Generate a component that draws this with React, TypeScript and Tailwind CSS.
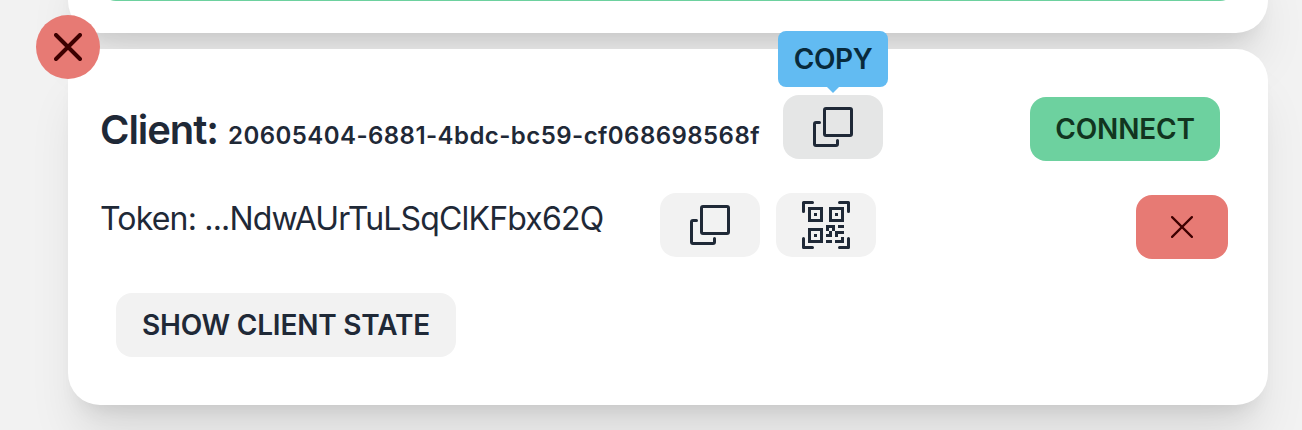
import type { ReactNode } from "react";
import { BsQrCodeScan } from "react-icons/bs";

const CARD =
  "w-[1200px] shrink-0 rounded-[32px] bg-white shadow-[0_40px_50px_-10px_rgb(0_0_0/0.1),0_16px_20px_-12px_rgb(0_0_0/0.1)]";

function CopyIcon() {
  return (
    <svg width="40" height="40" viewBox="0 0 40 40" fill="none" stroke="currentColor" strokeWidth="3" strokeLinecap="round" strokeLinejoin="round">
      <rect x="11.5" y="1.5" width="27" height="27" rx="1.5" />
      <path d="M6.5 15.5H3a1.5 1.5 0 0 0-1.5 1.5v20A1.5 1.5 0 0 0 3 38.5h20a1.5 1.5 0 0 0 1.5-1.5v-3.5" />
    </svg>
  );
}

function CrossIcon({ size, stroke }: { size: number; stroke: number }) {
  const near = stroke / 2;
  const far = size - near;
  return (
    <svg width={size} height={size} viewBox={`0 0 ${size} ${size}`} fill="none" stroke="currentColor" strokeWidth={stroke} strokeLinecap="round">
      <path d={`M${near} ${near}L${far} ${far}M${far} ${near}L${near} ${far}`} />
    </svg>
  );
}

function Button({ className, label, children }: { className: string; label?: string; children: ReactNode }) {
  return (
    <button
      aria-label={label}
      className={`flex h-16 shrink-0 items-center justify-center rounded-2xl text-[28px] font-semibold tracking-[-0.2px] whitespace-nowrap ${className}`}
    >
      {children}
    </button>
  );
}

export default function App() {
  return (
    <div className="flex h-[430px] w-[1302px] flex-col gap-4 overflow-hidden bg-[#f2f2f2] pl-[68px] font-['Inter',sans-serif] text-[#1f2937]">
      <section className={`${CARD} -mt-[63px] h-24 px-8`}>
        <div className="h-16 rounded-2xl bg-[#6dd19f]" />
      </section>

      <section className={`${CARD} relative flex h-[356px] flex-col px-8 pt-[46px]`}>
        <button
          aria-label="Remove"
          className="absolute -top-[34px] -left-8 flex size-16 items-center justify-center rounded-full bg-[#e77a74] text-[#3d0000]"
        >
          <CrossIcon size={28} stroke={4} />
        </button>

        <div className="flex h-16 items-center">
          <h2 className="flex w-[683px] shrink-0 items-baseline pt-1.5 whitespace-nowrap">
            <span className="w-32 text-[40px] leading-[48px] font-semibold tracking-[-1.05px]">Client:</span>
            <span className="text-2xl font-semibold tracking-[0.44px]">20605404-6881-4bdc-bc59-cf068698568f</span>
          </h2>
          <div className="relative">
            <Button className="w-[100px] bg-[#e5e6e6]" label="Copy">
              <CopyIcon />
            </Button>
            <div className="absolute -top-16 -left-[5px] flex h-14 w-[110px] items-center justify-center rounded-lg bg-[#62bbf2] text-[28px] font-semibold tracking-[-0.4px] text-[#082a3b]">
              COPY
              <svg className="absolute top-14 left-[49px]" width="12" height="6" viewBox="0 0 12 6">
                <path d="M0 0H12L6 6Z" fill="#62bbf2" />
              </svg>
            </div>
          </div>
          <Button className="mt-1 mr-4 ml-auto w-[190px] bg-[#6dd19f] text-[#12351f]">CONNECT</Button>
        </div>

        <div className="mt-[34px] flex h-16 items-center">
          <p className="-mt-[13px] w-[560px] shrink-0 text-[32px] leading-10 tracking-[-0.82px] whitespace-nowrap">
            Token: ...NdwAUrTuLSqClKFbx62Q
          </p>
          <Button className="w-[100px] bg-[#f2f2f2]" label="Copy token">
            <CopyIcon />
          </Button>
          <Button className="ml-4 w-[100px] bg-[#f2f2f2]" label="Show QR code">
            <BsQrCodeScan size={48} />
          </Button>
          <Button className="mt-1 mr-2 ml-auto w-[92px] bg-[#e77a74] text-[#3d0000]" label="Delete token">
            <CrossIcon size={22} stroke={2.2} />
          </Button>
        </div>

        <div className="mt-9 pl-4">
          <Button className="w-[340px] bg-[#f2f2f2]">SHOW CLIENT STATE</Button>
        </div>
      </section>
    </div>
  );
}
